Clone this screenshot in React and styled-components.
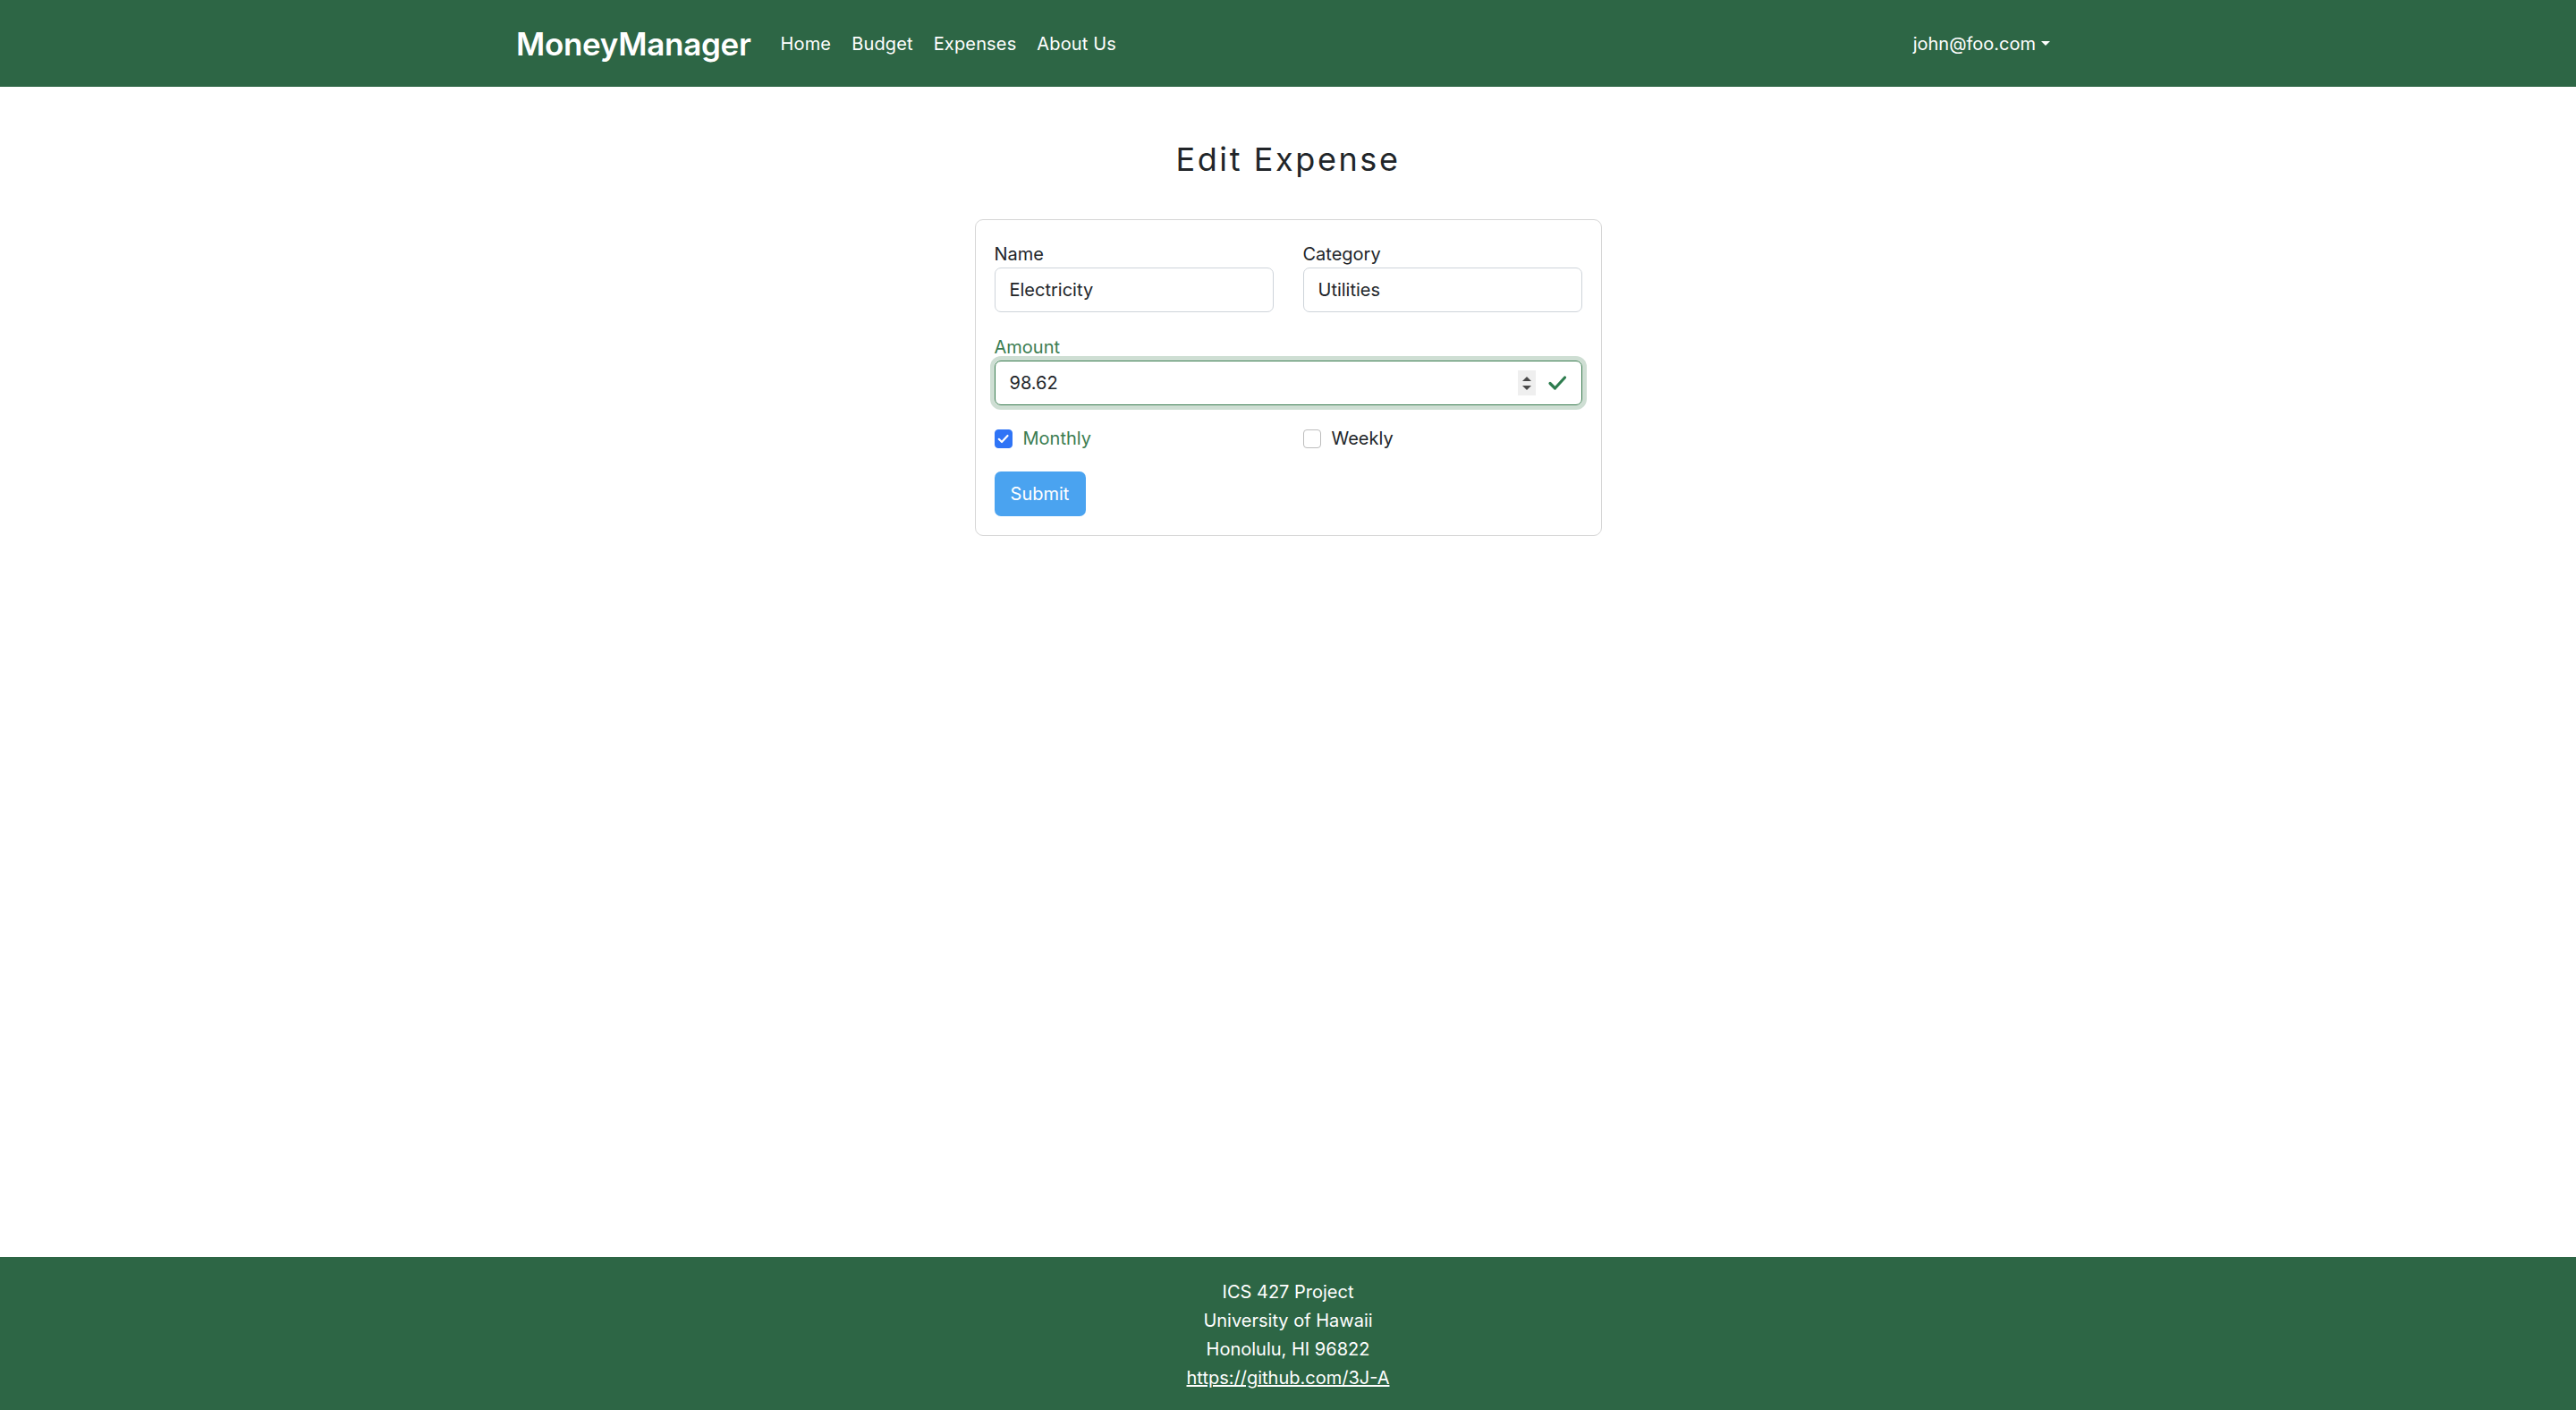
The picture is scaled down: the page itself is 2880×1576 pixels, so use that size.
import React from "react";
import styled, { createGlobalStyle } from "styled-components";

const GlobalStyle = createGlobalStyle`
  html, body {
    margin: 0;
    padding: 0;
  }
  body {
    font-family: Inter, "Liberation Sans", sans-serif;
    font-size: 20px;
    color: #212529;
    background: #ffffff;
  }
  * {
    box-sizing: border-box;
  }
`;

const Page = styled.div`
  min-height: 100vh;
  display: flex;
  flex-direction: column;
`;

const NavBar = styled.nav`
  height: 97px;
  background: #2d6645;
  display: flex;
  justify-content: center;
`;

const NavInner = styled.div`
  width: 1726px;
  display: flex;
  align-items: center;
`;

const Brand = styled.a`
  font-size: 35px;
  font-weight: 600;
  color: #ffffff;
  letter-spacing: -0.3px;
  margin-right: 33px;
  text-decoration: none;
`;

const NavLinks = styled.div`
  display: flex;
  gap: 23px;
  flex: 1;
`;

const NavLink = styled.a`
  color: #ffffff;
  font-size: 20px;
  letter-spacing: 0.15px;
  text-decoration: none;
`;

const UserMenu = styled.a`
  color: #ffffff;
  font-size: 20px;
  display: flex;
  align-items: center;
  gap: 6px;
  margin-right: 11px;
`;

const Caret = styled.span`
  width: 0;
  height: 0;
  border-left: 5px solid transparent;
  border-right: 5px solid transparent;
  border-top: 5px solid #ffffff;
`;

const Main = styled.main`
  flex: 1;
  display: flex;
  flex-direction: column;
  align-items: center;
`;

const Title = styled.h2`
  font-size: 36px;
  font-weight: 400;
  letter-spacing: 2.6px;
  line-height: 42px;
  margin: 60px 0 46px;
  color: #212529;
`;

const Card = styled.form`
  width: 701px;
  border: 1px solid #d6d6d6;
  border-radius: 9px;
  padding: 21px;
  display: flex;
  flex-direction: column;
`;

const Row = styled.div`
  display: grid;
  grid-template-columns: 1fr 1fr;
  column-gap: 33px;
  margin-bottom: ${(p) => p.$mb || 0}px;
`;

const Field = styled.div`
  display: flex;
  flex-direction: column;
`;

const Label = styled.label`
  font-size: 20px;
  line-height: 30px;
  margin-top: 2px;
  color: ${(p) => (p.$valid ? "#3b7d51" : "#212529")};
`;

const InputBox = styled.div`
  height: 50px;
  border: 1px solid ${(p) => (p.$valid ? "#3b7d51" : "#ced4da")};
  border-radius: 7px;
  padding: 0 16px;
  display: flex;
  align-items: center;
  font-size: 20px;
  color: #212529;
  box-shadow: ${(p) => (p.$valid ? "0 0 0 5px rgba(59, 125, 81, 0.25)" : "none")};
`;

const InputText = styled.span`
  flex: 1;
`;

const Spinner = styled.div`
  width: 20px;
  height: 28px;
  background: #efefef;
  display: flex;
  flex-direction: column;
  align-items: center;
  justify-content: center;
  gap: 5px;
  margin-right: 13px;
`;

const Tri = styled.span`
  width: 0;
  height: 0;
  border-left: 5px solid transparent;
  border-right: 5px solid transparent;
  ${(p) =>
    p.$up ? "border-bottom: 5px solid #4a4a4a;" : "border-top: 5px solid #4a4a4a;"}
`;

const CheckRow = styled.div`
  display: grid;
  grid-template-columns: 1fr 1fr;
  column-gap: 33px;
  margin-top: 22px;
`;

const CheckItem = styled.label`
  display: flex;
  align-items: center;
  gap: 12px;
  line-height: 30px;
  font-size: 20px;
  color: ${(p) => (p.$checked ? "#3b7d51" : "#212529")};
`;

const Box = styled.span`
  width: 20px;
  height: 21px;
  border-radius: 4px;
  border: 1px solid ${(p) => (p.$checked ? "#2f74f6" : "#bdbdbd")};
  background: ${(p) => (p.$checked ? "#2f74f6" : "#ffffff")};
  display: flex;
  align-items: center;
  justify-content: center;
`;

const SubmitButton = styled.button`
  align-self: flex-start;
  margin-top: 22px;
  height: 50px;
  width: 102px;
  border: none;
  border-radius: 7px;
  background: #4aa3f0;
  color: #ffffff;
  font-family: Inter, "Liberation Sans", sans-serif;
  font-size: 20px;
`;

const Footer = styled.footer`
  background: #2d6645;
  color: #ffffff;
  text-align: center;
  font-size: 20px;
  line-height: 32px;
  padding: 23px 0 20px;
`;

const FooterLink = styled.a`
  color: #ffffff;
  text-decoration: underline;
`;

const CheckIcon = ({ size = 22, color = "#2e7d4f", stroke = 3.2 }) => (
  <svg width={size} height={size} viewBox="0 0 22 22">
    <path
      d="M3 11.5 L8.5 17 L19.5 5"
      fill="none"
      stroke={color}
      strokeWidth={stroke}
      strokeLinecap="round"
      strokeLinejoin="round"
    />
  </svg>
);

export default function App() {
  return (
    <>
      <GlobalStyle />
      <Page>
        <NavBar>
          <NavInner>
            <Brand>MoneyManager</Brand>
            <NavLinks>
              <NavLink>Home</NavLink>
              <NavLink>Budget</NavLink>
              <NavLink>Expenses</NavLink>
              <NavLink>About Us</NavLink>
            </NavLinks>
            <UserMenu>
              john@foo.com
              <Caret />
            </UserMenu>
          </NavInner>
        </NavBar>

        <Main>
          <Title>Edit Expense</Title>
          <Card>
            <Row $mb={22}>
              <Field>
                <Label>Name</Label>
                <InputBox>
                  <InputText>Electricity</InputText>
                </InputBox>
              </Field>
              <Field>
                <Label>Category</Label>
                <InputBox>
                  <InputText>Utilities</InputText>
                </InputBox>
              </Field>
            </Row>
            <Field>
              <Label $valid>Amount</Label>
              <InputBox $valid>
                <InputText>98.62</InputText>
                <Spinner>
                  <Tri $up />
                  <Tri />
                </Spinner>
                <CheckIcon />
              </InputBox>
            </Field>
            <CheckRow>
              <CheckItem $checked>
                <Box $checked>
                  <CheckIcon size={13} color="#ffffff" stroke={3.6} />
                </Box>
                Monthly
              </CheckItem>
              <CheckItem>
                <Box />
                Weekly
              </CheckItem>
            </CheckRow>
            <SubmitButton type="button">Submit</SubmitButton>
          </Card>
        </Main>

        <Footer>
          <div>ICS 427 Project</div>
          <div>University of Hawaii</div>
          <div>Honolulu, HI 96822</div>
          <FooterLink>https://github.com/3J-A</FooterLink>
        </Footer>
      </Page>
    </>
  );
}
